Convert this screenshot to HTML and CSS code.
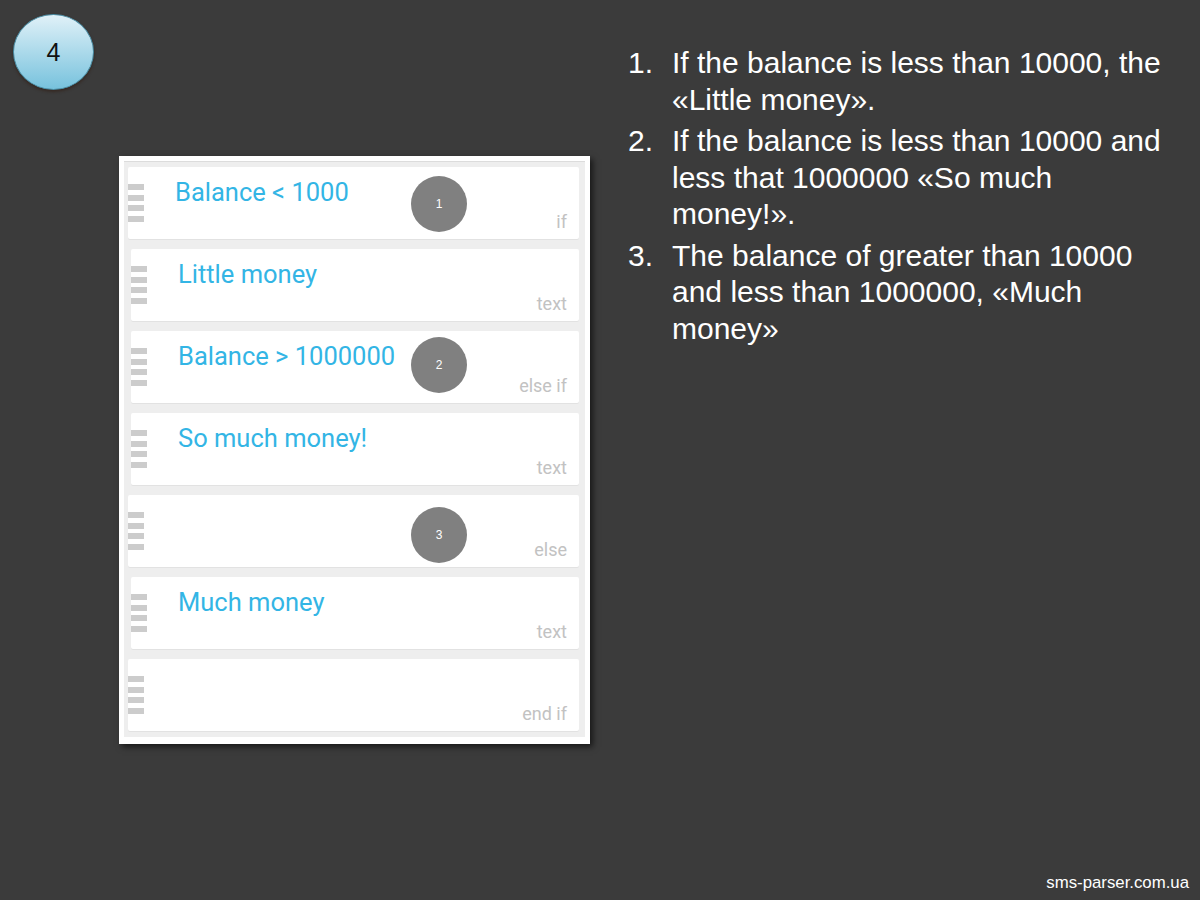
FILE: index.html
```html
<!DOCTYPE html>
<html>
<head>
    <link rel="stylesheet" href="styles.css">
</head>
<body>
    <div class="slide">
        <div class="content">
            <div class="left">
                <div class="step">4</div>

                <div class="device">
                    <div class="card ctl">
                        <div class="grip"><span></span><span></span><span></span><span></span></div>
                        <div class="card-body">
                            <div class="title">Balance &lt; 1000</div>
                            <div class="kind">if</div>
                        </div>
                    </div>
                    <div class="card">
                        <div class="grip"><span></span><span></span><span></span><span></span></div>
                        <div class="card-body">
                            <div class="title">Little money</div>
                            <div class="kind">text</div>
                        </div>
                    </div>
                    <div class="card">
                        <div class="grip"><span></span><span></span><span></span><span></span></div>
                        <div class="card-body">
                            <div class="title">Balance &gt; 1000000</div>
                            <div class="kind">else if</div>
                        </div>
                    </div>
                    <div class="card">
                        <div class="grip"><span></span><span></span><span></span><span></span></div>
                        <div class="card-body">
                            <div class="title">So much money!</div>
                            <div class="kind">text</div>
                        </div>
                    </div>
                    <div class="card ctl">
                        <div class="grip"><span></span><span></span><span></span><span></span></div>
                        <div class="card-body">
                            <div class="title"></div>
                            <div class="kind">else</div>
                        </div>
                    </div>
                    <div class="card">
                        <div class="grip"><span></span><span></span><span></span><span></span></div>
                        <div class="card-body">
                            <div class="title">Much money</div>
                            <div class="kind">text</div>
                        </div>
                    </div>
                    <div class="card ctl">
                        <div class="grip"><span></span><span></span><span></span><span></span></div>
                        <div class="card-body">
                            <div class="title"></div>
                            <div class="kind">end if</div>
                        </div>
                    </div>

                    <div class="marker m1">1</div>
                    <div class="marker m2">2</div>
                    <div class="marker m3">3</div>
                </div>
            </div>

            <ol class="notes">
                <li><span class="num">1.</span><span>If the balance is less than 10000, the «Little money».</span></li>
                <li><span class="num">2.</span><span>If the balance is less than 10000 and less that 1000000 «So much money!».</span></li>
                <li><span class="num">3.</span><span>The balance of greater than 10000 and less than 1000000, «Much money»</span></li>
            </ol>
        </div>

        <div class="footer">sms-parser.com.ua</div>
    </div>
</body>
</html>
```

FILE: styles.css
```css
body {
    margin: 0;
    background: #3b3b3b;
    font-family: "Liberation Sans", Arial, sans-serif;
}
.slide {
    width: 1200px;
    height: 900px;
    display: flex;
    flex-direction: column;
    overflow: hidden;
}
.content {
    display: flex;
}
.left {
    width: 600px;
    flex-shrink: 0;
    padding: 14px 0 0 13px;
    box-sizing: border-box;
}
.step {
    width: 79px;
    height: 74px;
    border-radius: 50%;
    border: 1.5px solid #4a8ca3;
    background: linear-gradient(#e0f1f8, #77c2dd);
    box-shadow: 0 2px 3px rgba(50, 25, 15, 0.55);
    display: flex;
    align-items: center;
    justify-content: center;
    font-size: 25px;
    color: #111;
}

/* phone screenshot */
.device {
    position: relative;
    width: 448px;
    margin: 66px 0 0 106px;
    padding: 6px 6px 6px 7px;
    border: 5px solid #fff;
    border-bottom-width: 7px;
    background: #eeeeee;
    box-shadow: inset 0 1px 0 #dcdcdc, 3px 3px 6px rgba(0, 0, 0, 0.6);
    display: flex;
    flex-direction: column;
    gap: 10px;
    font-family: Roboto, sans-serif;
}
.card {
    height: 72px;
    background: #fff;
    border-radius: 2px;
    box-shadow: 0 1px 0 #e2e2e2;
    display: flex;
    align-items: center;
}
.card.ctl {
    margin-left: -3px;
}
.grip {
    width: 16px;
    display: flex;
    flex-direction: column;
    gap: 4.5px;
    flex-shrink: 0;
}
.grip span {
    height: 6px;
    background: #cccccc;
}
.card-body {
    flex: 1;
    align-self: stretch;
    display: flex;
    flex-direction: column;
    padding: 10px 12px 7px 31px;
}
.title {
    font-size: 25.5px;
    line-height: 30px;
    color: #33b5e5;
    min-height: 30px;
}
.kind {
    margin-top: auto;
    align-self: flex-end;
    font-size: 18px;
    line-height: 21px;
    color: #c2c2c2;
}
.marker {
    position: absolute;
    left: 287px;
    width: 56px;
    height: 56px;
    border-radius: 50%;
    background: #808080;
    color: #fff;
    font-family: "Liberation Sans", Arial, sans-serif;
    font-size: 12px;
    display: flex;
    align-items: center;
    justify-content: center;
}
.m1 { top: 15px; }
.m2 { top: 176px; }
.m3 { top: 346px; }

/* notes */
.notes {
    list-style: none;
    margin: 0;
    padding: 45px 0 0 28px;
    width: 540px;
    color: #fff;
    font-size: 30px;
    line-height: 36.5px;
}
.notes li {
    display: flex;
    margin-bottom: 5px;
}
.notes .num {
    width: 44px;
    flex-shrink: 0;
}

.footer {
    margin-top: auto;
    padding: 0 11px 7px 0;
    text-align: right;
    color: #fff;
    font-size: 16.8px;
    line-height: 20px;
}
```
